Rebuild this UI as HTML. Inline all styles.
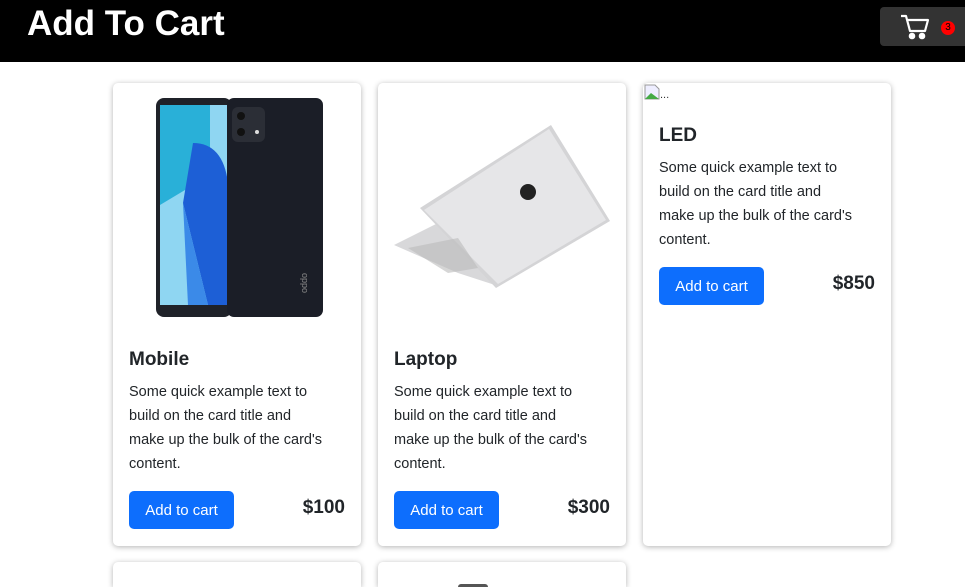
<!DOCTYPE html>
<html><head><meta charset="utf-8"><style>
*{margin:0;padding:0;box-sizing:border-box}
html,body{width:965px;height:587px;overflow:hidden}
body{background:#fff;font-family:"Liberation Sans","DejaVu Sans",sans-serif;color:#212529;position:relative}
.hdr{position:absolute;left:0;top:0;width:965px;height:62px;background:#000}
.hdr h1{position:absolute;left:27px;top:4px;color:#fff;font-size:35px;font-weight:700}
.cartb{position:absolute;left:880px;top:7px;width:85px;height:39px;background:#333;border-radius:4px 0 0 4px}
.badge{position:absolute;left:941px;top:21px;width:14px;height:14px;border-radius:50%;background:#f00;color:#000;font-size:10px;text-align:center;line-height:14px}
.card{position:absolute;width:248px;height:463px;background:#fff;border-radius:5px;box-shadow:0 1px 6px rgba(0,0,0,.3)}
.t{position:absolute;left:16px;font-size:19px;font-weight:600;white-space:nowrap}
.p{position:absolute;left:16px;font-size:14.5px;line-height:24px;white-space:nowrap}
.btn{position:absolute;left:16px;width:105px;height:38px;background:#0d6efd;color:#fff;border-radius:5px;font-size:15px;text-align:center;line-height:40px}
.pr{position:absolute;right:16px;font-size:19px;font-weight:700}
</style></head><body>
<div class="hdr"><h1>Add To Cart</h1></div>
<div class="cartb"><svg style="position:absolute;left:20px;top:6px" width="30" height="28" viewBox="0 0 30 28" fill="none" stroke="#fff" stroke-width="2.2" stroke-linejoin="round"><path d="M1 3h5l4 15h15l3-11H8"/><circle cx="12" cy="23" r="2.2" fill="#fff"/><circle cx="22" cy="23" r="2.2" fill="#fff"/></svg></div>
<div class="badge">3</div>

<div class="card" style="left:113px;top:83px">
<svg style="position:absolute;left:0;top:0" width="248" height="250">
<rect x="43" y="15" width="76" height="219" rx="8" fill="#1f2229"/>
<path d="M47 22h68v200H47z" fill="#8fd6f2"/>
<path d="M47 22h50v70l-50 30z" fill="#29b0d8"/>
<path d="M80 60q30 0 35 40v122H95L70 120z" fill="#1d5fd6"/>
<path d="M70 120L95 222H75z" fill="#3b8ae8"/>
<rect x="114" y="15" width="96" height="219" rx="7" fill="#1b1e27"/>
<rect x="119" y="24" width="33" height="35" rx="6" fill="#2b2e36"/>
<circle cx="128" cy="33" r="4" fill="#111"/><circle cx="128" cy="49" r="4" fill="#111"/><circle cx="144" cy="49" r="2" fill="#ddd"/>
<text x="189" y="190" transform="rotate(90 189 190)" font-size="9" fill="#888" font-family="Liberation Sans">oppo</text>
</svg>
<div class="t" style="top:266px">Mobile</div>
<div class="p" style="top:297px">Some quick example text to<br>build on the card title and<br>make up the bulk of the card's<br>content.</div>
<div class="btn" style="top:408px">Add to cart</div>
<div class="pr" style="top:414px">$100</div>
</div>

<div class="card" style="left:378px;top:83px">
<svg style="position:absolute;left:0;top:0" width="248" height="250">
<path d="M16 162L60 140L110 150L120 203L80 190z" fill="#d8d8da"/>
<path d="M42 125L173 42L232 138L118 205z" fill="#d4d4d6"/>
<path d="M46 127L171 46L228 137L120 201z" fill="#e6e6e8"/>
<circle cx="150" cy="109" r="8" fill="#222"/>
<path d="M30 165L80 155L100 185L70 190z" fill="#bbb" opacity=".6"/>
</svg>
<div class="t" style="top:266px">Laptop</div>
<div class="p" style="top:297px">Some quick example text to<br>build on the card title and<br>make up the bulk of the card's<br>content.</div>
<div class="btn" style="top:408px">Add to cart</div>
<div class="pr" style="top:414px">$300</div>
</div>

<div class="card" style="left:643px;top:83px">
<svg style="position:absolute;left:1px;top:1px" width="16" height="16"><path d="M1 1h10l4 4v10H1z" fill="#eef" stroke="#999"/><path d="M1 15l6-6 8 6z" fill="#4a4"/></svg>
<div style="position:absolute;left:17px;top:6px;font-size:11px;color:#333">...</div>
<div class="t" style="top:42px">LED</div>
<div class="p" style="top:73px">Some quick example text to<br>build on the card title and<br>make up the bulk of the card's<br>content.</div>
<div class="btn" style="top:184px">Add to cart</div>
<div class="pr" style="top:190px">$850</div>
</div>

<div class="card" style="left:113px;top:562px;height:25px;border-radius:5px 5px 0 0"></div>
<div class="card" style="left:378px;top:562px;height:25px;border-radius:5px 5px 0 0"><div style="position:absolute;left:80px;top:22px;width:30px;height:3px;border-radius:15px 15px 0 0;background:#555"></div></div>
</body></html>
